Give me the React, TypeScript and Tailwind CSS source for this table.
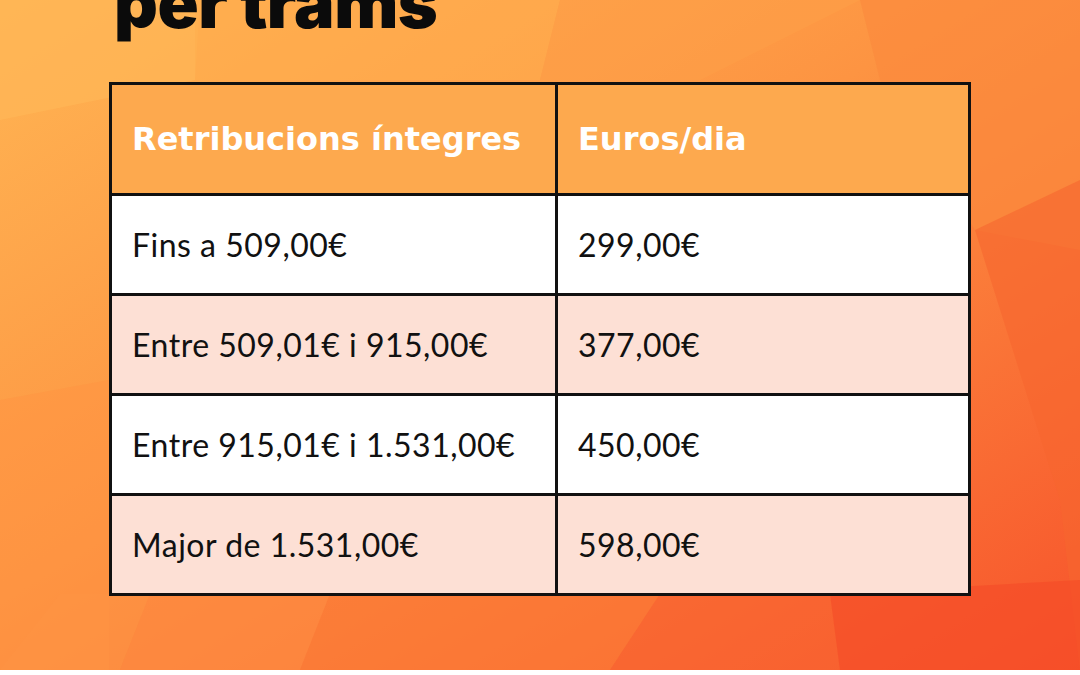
const rows = [
  { range: "Fins a 509,00€", value: "299,00€", tint: false },
  { range: "Entre 509,01€ i 915,00€", value: "377,00€", tint: true },
  { range: "Entre 915,01€ i 1.531,00€", value: "450,00€", tint: false },
  { range: "Major de 1.531,00€", value: "598,00€", tint: true },
];

// low-poly backdrop, drawn behind the content
const Backdrop = () => (
  <svg className="absolute inset-0 h-full w-full" viewBox="0 0 1080 670" preserveAspectRatio="none">
    <defs>
      <linearGradient id="bg" x1="0" y1="0" x2="1" y2="1">
        <stop offset="0" stopColor="#ffb553" />
        <stop offset="0.45" stopColor="#fd9442" />
        <stop offset="1" stopColor="#f7532b" />
      </linearGradient>
    </defs>
    <rect width="1080" height="670" fill="url(#bg)" />
    <polygon points="0,0 200,0 195,80 0,120" fill="#ffb757" opacity="0.7" />
    <polygon points="195,0 560,0 540,80 195,80" fill="#ffad4f" opacity="0.6" />
    <polygon points="560,0 860,0 700,80 540,80" fill="#fd9e48" opacity="0.6" />
    <polygon points="860,0 1080,0 1080,250 975,230 880,80" fill="#fb8a3d" opacity="0.7" />
    <polygon points="975,230 1080,180 1080,670 1060,500" fill="#f6662f" opacity="0.6" />
    <polygon points="0,400 109,380 109,670 0,670" fill="#ff9442" opacity="0.5" />
    <polygon points="60,594 150,594 120,670 0,670" fill="#fe9444" opacity="0.5" />
    <polygon points="150,594 330,594 300,670 120,670" fill="#fd8940" opacity="0.7" />
    <polygon points="330,594 660,594 610,670 300,670" fill="#fb7935" opacity="0.6" />
    <polygon points="660,594 830,594 840,670 610,670" fill="#f86330" opacity="0.6" />
    <polygon points="830,594 1080,580 1080,670 840,670" fill="#f54d28" opacity="0.7" />
  </svg>
);

export default function App() {
  return (
    <div className="w-[1080px] h-[675px] overflow-hidden bg-white">
      <div className="relative h-[670px] overflow-hidden">
        <Backdrop />
        <div className="relative pl-[109px]">
          <h1
            className="mt-[-31px] pl-[5px] text-[68px] leading-none font-black tracking-[-0.5px] text-[#0b0b0b]"
            style={{ fontFamily: "Inter, 'Noto Sans', sans-serif" }}
          >
            per trams
          </h1>
          <div className="mt-[45px] w-[862px] border-[3px] border-[#111]">
            <div
              className="grid grid-cols-[446px_1fr] h-[108px] bg-[#fda94e] text-white text-[32px] font-bold"
              style={{ fontFamily: "'DejaVu Sans', 'Noto Sans', sans-serif" }}
            >
              <div className="flex items-center pl-[20px] border-r-[3px] border-[#111]">Retribucions íntegres</div>
              <div className="flex items-center pl-[20px]">Euros/dia</div>
            </div>
            {rows.map(r => (
              <div
                key={r.range}
                className={`grid grid-cols-[446px_1fr] h-[100px] border-t-[3px] border-[#111] text-[32px] tracking-[0.5px] text-[#111] ${r.tint ? "bg-[#fde0d5]" : "bg-white"}`}
                style={{ fontFamily: "Lato, 'Noto Sans', sans-serif" }}
              >
                <div className="flex items-center pl-[20px] border-r-[3px] border-[#111]">{r.range}</div>
                <div className="flex items-center pl-[20px]">{r.value}</div>
              </div>
            ))}
          </div>
        </div>
      </div>
    </div>
  );
}
